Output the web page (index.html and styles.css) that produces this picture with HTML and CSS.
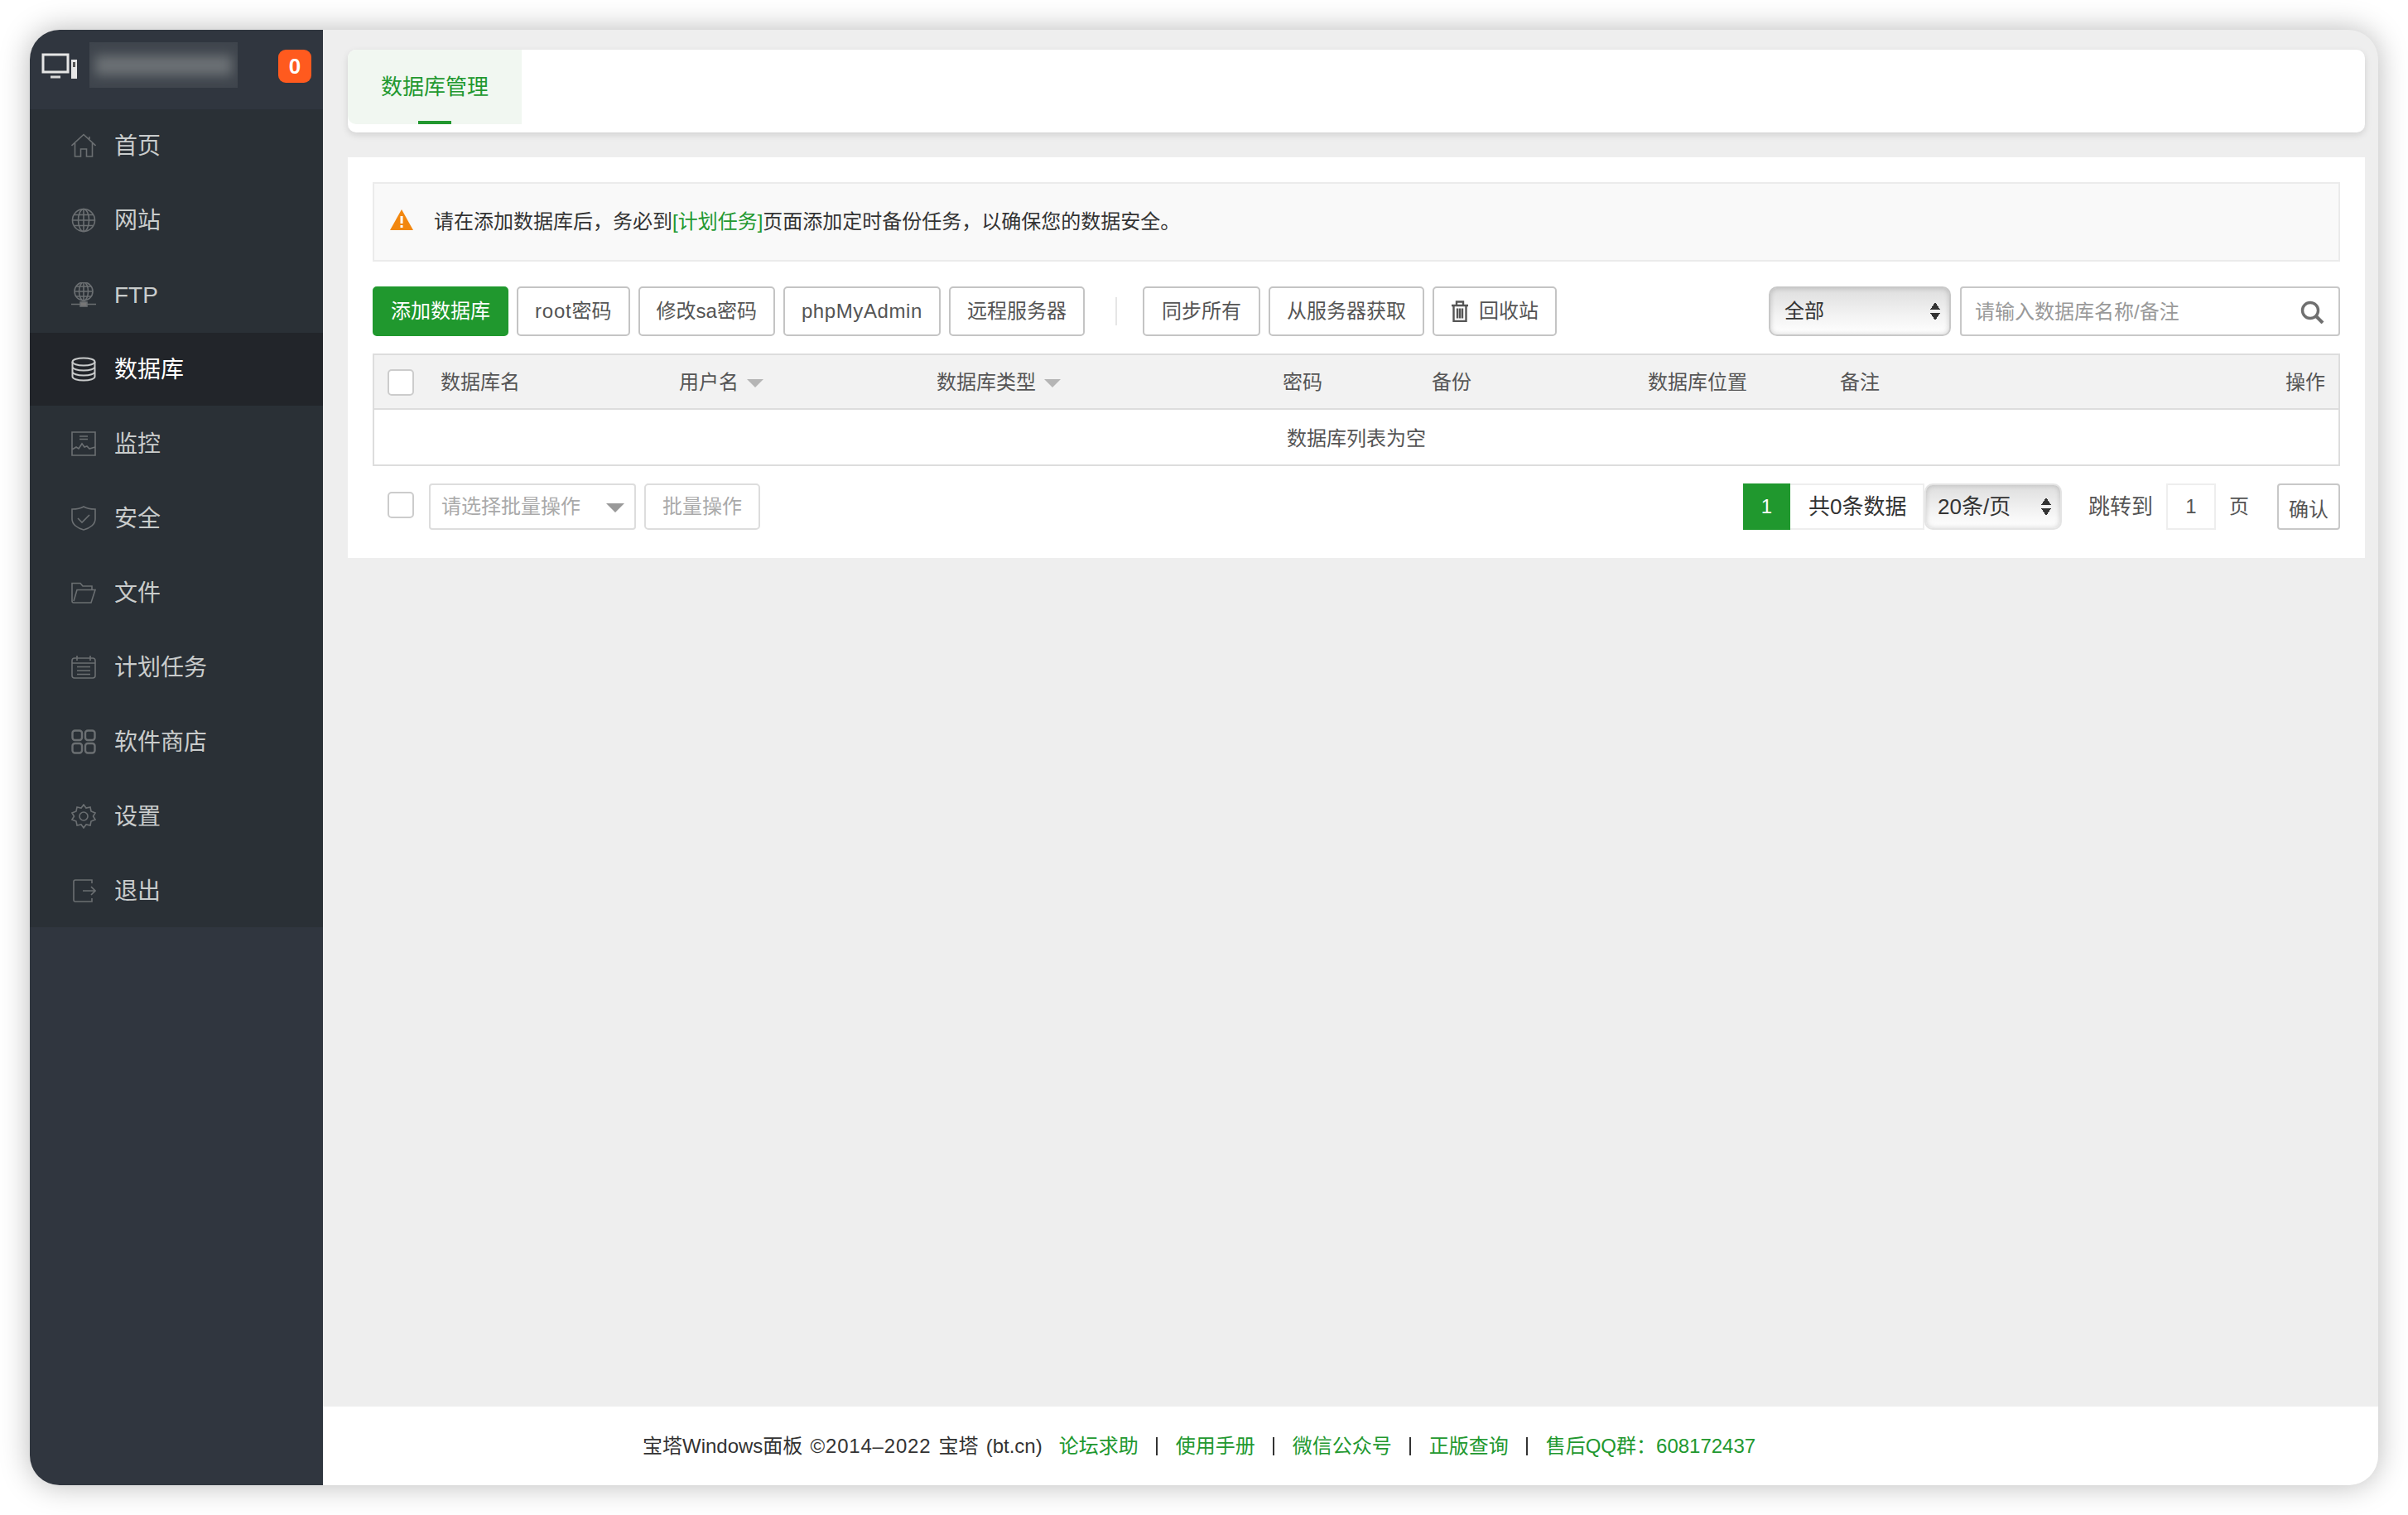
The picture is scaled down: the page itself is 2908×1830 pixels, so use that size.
FILE: index.html
```html
<!DOCTYPE html>
<html lang="zh-CN">
<head>
<meta charset="utf-8">
<title>数据库管理</title>
<link rel="stylesheet" href="styles.css">
</head>
<body>
<div class="window">
  <aside class="sidebar">
    <div class="brand">
      <svg class="brand-icon" viewBox="0 0 44 32"><path d="M2 2h30v21H2z" fill="none" stroke="#e6e6e6" stroke-width="3"/><path d="M11 29h12" stroke="#d8d8d8" stroke-width="3"/><path d="M36 8h7v23h-7z" fill="#e6e6e6"/><path d="M38 11h3v6h-3z" fill="#555"/></svg>
      <div class="blur-box"><div class="blur-bar"></div></div>
      <span class="badge">0</span>
    </div>
    <nav class="menu">
      <a class="menu-item"><svg class="ico" viewBox="0 0 30 30"><path d="M0.5 15L15 1.5 29.5 15M4.5 12v16h7v-9h7v9h7V12M22 4v3" /></svg>首页</a>
      <a class="menu-item"><svg class="ico" viewBox="0 0 30 30"><circle cx="15" cy="15" r="13.5"/><ellipse cx="15" cy="15" rx="6.5" ry="13.5"/><path d="M15 1.500v27M1.500 15h27M3.500 8.500h23M3.500 21.500h23"/></svg>网站</a>
      <a class="menu-item"><svg class="ico" viewBox="0 0 30 30"><circle cx="15" cy="11" r="11"/><ellipse cx="15" cy="11" rx="5.500" ry="11"/><path d="M15 0v22M4 11h22M6 5h18M6 17h18M0 26.500h30"/><rect x="11" y="24" width="8" height="5" fill="#777"/></svg>FTP</a>
      <a class="menu-item active"><svg class="ico" viewBox="0 0 30 30"><ellipse cx="15" cy="6" rx="13.500" ry="4.500"/><path d="M1.500 6v18c0 2.500 6 4.500 13.500 4.500s13.500-2 13.500-4.500V6M1.500 12c0 2.500 6 4.500 13.500 4.500s13.500-2 13.500-4.500M1.500 18c0 2.500 6 4.500 13.500 4.500s13.500-2 13.500-4.500"/></svg>数据库</a>
      <a class="menu-item"><svg class="ico" viewBox="0 0 30 30"><path d="M1 1h28v28H1zM10 6h10M10 9.500h10M1 22l5-3 3 2 4-6 3 4 3-1 3 3 7-2"/></svg>监控</a>
      <a class="menu-item"><svg class="ico" viewBox="0 0 30 30"><path d="M15 1c4 2.500 8 3 14 3v12c0 6-6 11-14 13C7 27 1 22 1 16V4c6 0 10-.5 14-3z"/><path d="M8 15l5 5 9-9"/></svg>安全</a>
      <a class="menu-item"><svg class="ico" viewBox="0 0 30 30"><path d="M1 25V3.500h10l3 3.500h11v4M1 25c0 1 1 2 2 2h21l5-15.500H7L3 25"/></svg>文件</a>
      <a class="menu-item"><svg class="ico" viewBox="0 0 30 30"><rect x="1" y="4" width="28" height="24" rx="3"/><path d="M7 1v6M23 1v6M1 10h28M7 14.500h16M7 19h16M7 23.500h16" /></svg>计划任务</a>
      <a class="menu-item"><svg class="ico ico-wide" viewBox="0 0 30 30"><rect x="1.500" y="1.500" width="11.500" height="11.500" rx="3"/><rect x="17" y="1.500" width="11.500" height="11.500" rx="3"/><rect x="1.500" y="17" width="11.500" height="11.500" rx="3"/><rect x="17" y="17" width="11.500" height="11.500" rx="3"/></svg>软件商店</a>
      <a class="menu-item"><svg class="ico" viewBox="0 0 30 30"><circle cx="15" cy="15" r="5"/><path d="M15 1l3 4 5-1 1 5 5 2-2.500 4 2.500 4-5 2-1 5-5-1-3 4-3-4-5 1-1-5-5-2 2.500-4L1 11l5-2 1-5 5 1z"/></svg>设置</a>
      <a class="menu-item"><svg class="ico" viewBox="0 0 30 30"><path d="M25 6V2H5a2 2 0 0 0-2 2v22a2 2 0 0 0 2 2h20v-4M14 15h15M24 10l5 5-5 5"/></svg>退出</a>
    </nav>
  </aside>
  <div class="content">
    <div class="page">
      <div class="tabbar"><div class="tab">数据库管理<i class="tab-line"></i></div></div>
      <section class="panel">
        <div class="notice">
          <svg class="warn" viewBox="0 0 28 25"><path d="M14 0l14 25H0z" fill="#f2870f"/><path d="M12.500 8h3v9h-3zM12.500 19h3v3h-3z" fill="#fff"/></svg>
          <span>请在添加数据库后，务必到<a class="link">[计划任务]</a>页面添加定时备份任务，以确保您的数据安全。</span>
        </div>
        <div class="toolbar">
          <a class="btn primary">添加数据库</a>
          <a class="btn"><span class="latin-root">root</span>密码</a>
          <a class="btn">修改sa密码</a>
          <a class="btn"><span class="latin-php">phpMyAdmin</span></a>
          <a class="btn">远程服务器</a>
          <i class="sep"></i>
          <a class="btn btn-sync">同步所有</a>
          <a class="btn">从服务器获取</a>
          <a class="btn"><svg class="trash" viewBox="0 0 22 26"><path d="M1 6h20M7 5V1.500h8V5M3.500 6v19h15V6M8 9.500v12M11 9.500v12M14 9.500v12"/></svg>回收站</a>
          <div class="toolbar-right">
            <div class="native-select main-select">全部<i class="updown"></i></div>
            <div class="search"><input class="search-input" placeholder="请输入数据库名称/备注"><svg class="search-icon" viewBox="0 0 29 28"><circle cx="12" cy="12" r="9.500"/><path d="M19 19l8 8" stroke-width="4"/></svg></div>
          </div>
        </div>
        <table class="grid">
          <colgroup><col class="c1"><col class="c2"><col class="c3"><col class="c4"><col class="c5"><col class="c6"><col class="c7"><col></colgroup>
          <thead>
            <tr>
              <th class="check-cell"><i class="check"></i></th>
              <th>数据库名</th>
              <th>用户名<i class="caret"></i></th>
              <th>数据库类型<i class="caret"></i></th>
              <th>密码</th>
              <th>备份</th>
              <th>数据库位置</th>
              <th class="split"><span>备注</span><span>操作</span></th>
            </tr>
          </thead>
          <tbody><tr><td colspan="8">数据库列表为空</td></tr></tbody>
        </table>
        <div class="footer-row">
          <i class="check foot-check"></i>
          <div class="batch-select">请选择批量操作<i class="batch-caret"></i></div>
          <a class="batch-btn">批量操作</a>
          <div class="pager">
            <span class="page-cur">1</span>
            <span class="page-count">共0条数据</span>
            <div class="native-select page-select">20条/页<i class="updown"></i></div>
            <span class="jump">跳转到</span>
            <span class="page-input">1</span>
            <span class="page-unit">页</span>
            <a class="confirm">确认</a>
          </div>
        </div>
      </section>
    </div>
    <footer class="footer">
      <span class="copyright">宝塔Windows面板 <span class="latin-year">©2014–2022</span> 宝塔 (bt.cn)</span>
      <a class="link f-first">论坛求助</a><i class="bar"></i>
      <a class="link">使用手册</a><i class="bar"></i>
      <a class="link">微信公众号</a><i class="bar"></i>
      <a class="link">正版查询</a><i class="bar"></i>
      <a class="link">售后QQ群：608172437</a>
    </footer>
  </div>
</div>
</body>
</html>
```
FILE: styles.css
```css
* { box-sizing: border-box; }
html, body { margin: 0; height: 100%; }
body {
  width: 2908px;
  height: 1830px;
  padding: 36px;
  background: #fff;
  overflow: hidden;
  font-family: "Liberation Sans", "Noto Sans CJK SC", sans-serif;
  font-size: 24px;
  color: #555;
}
i { display: block; font-style: normal; }

.window {
  display: flex;
  width: 2836px;
  height: 1758px;
  border-radius: 36px;
  overflow: hidden;
  background: #eee;
  box-shadow: 0 0 36px rgba(0, 0, 0, .28);
}

/* sidebar */
.sidebar {
  flex: 0 0 354px;
  background: #30363f;
  display: flex;
  flex-direction: column;
}
.brand {
  height: 96px;
  display: flex;
  align-items: flex-start;
  padding: 15px 14px 0 14px;
}
.brand-icon { width: 44px; height: 32px; margin-top: 13px; flex: none; }
.blur-box {
  width: 179px;
  height: 55px;
  margin-left: 14px;
  background: #3f454d;
  overflow: hidden;
  display: flex;
  align-items: center;
  justify-content: center;
}
.blur-bar {
  width: 165px;
  height: 24px;
  background: #6c7175;
  filter: blur(7px);
}
.badge {
  width: 40px;
  height: 40px;
  margin: 9px 0 0 auto;
  border-radius: 9px;
  background: #ff5a1e;
  color: #fff;
  font-size: 26px;
  font-weight: bold;
  line-height: 40px;
  text-align: center;
}
.menu {
  background: #2a3036;
  display: flex;
  flex-direction: column;
  gap: 2px;
}
.menu-item {
  height: 88px;
  display: flex;
  align-items: center;
  padding: 2px 0 0 50px;
  color: #c9cccc;
  font-size: 28px;
  line-height: 1;
}
.menu-item.active { background: #22252a; color: #fff; }
.ico {
  width: 30px;
  height: 30px;
  margin: -2px 22px 0 0;
  flex: none;
  fill: none;
  stroke: #6b6f72;
  stroke-width: 1.600;
}
.active .ico { stroke: #c8caca; stroke-width: 2; }
.ico-wide { stroke-width: 2.400; }

/* content */
.content {
  flex: 1;
  display: flex;
  flex-direction: column;
  min-width: 0;
}
.page { flex: 1; padding: 24px 16px 0 30px; }
.tabbar {
  height: 100px;
  background: #fff;
  border-radius: 10px;
  box-shadow: 0 3px 8px rgba(0, 0, 0, .12);
}
.tab {
  position: relative;
  width: 210px;
  height: 90px;
  background: #f1f7f1;
  border-radius: 10px 0 0 10px;
  color: #22982f;
  font-size: 26px;
  line-height: 90px;
  text-align: center;
}
.tab-line {
  position: absolute;
  left: 85px;
  bottom: 0;
  width: 40px;
  height: 4px;
  background: #22982f;
}
.panel {
  margin-top: 30px;
  height: 484px;
  background: #fff;
  padding: 30px;
}
.notice {
  height: 96px;
  background: #f9f9f9;
  border: 2px solid #ebebeb;
  display: flex;
  align-items: center;
  padding-left: 19px;
  color: #333;
  line-height: 1;
}
.warn { width: 28px; height: 25px; margin: 0 25px 5px 0; flex: none; }
.link { color: #22982f; text-decoration: none; }

.toolbar {
  margin-top: 30px;
  display: flex;
  align-items: center;
  gap: 10px;
  height: 60px;
}
.btn {
  height: 60px;
  padding: 0 20px;
  border: 2px solid #c4c4c4;
  border-radius: 5px;
  background: #fff;
  color: #555;
  display: flex;
  align-items: center;
  line-height: 1;
  white-space: nowrap;
}
.btn.primary {
  background: #20982e;
  border-color: #20982e;
  color: #fff;
}
.btn-sync { padding: 0 21px; }
.latin-root { letter-spacing: .8px; }
.latin-php { letter-spacing: .6px; }
.latin-year { letter-spacing: .8px; }
.copyright { word-spacing: 2.500px; }
.sep { width: 2px; height: 34px; background: #e6e6e6; margin: 0 21px 0 27px; }
.trash { width: 22px; height: 26px; margin-right: 12px; fill: none; stroke: #555; stroke-width: 2.400; }
.toolbar-right { margin-left: auto; display: flex; gap: 11px; }
.native-select {
  position: relative;
  height: 60px;
  border-radius: 10px;
  border: 2px solid #c8c8c8;
  background: linear-gradient(#dedede, #f3f3f3 60%, #fff);
  box-shadow: inset 0 0 6px rgba(0, 0, 0, .18);
  color: #333;
  display: flex;
  align-items: center;
  line-height: 1;
}
.main-select { width: 220px; padding-left: 17px; }
.updown {
  position: absolute;
  right: 11px;
  top: 50%;
  width: 12px;
  height: 22px;
  margin-top: -11px;
  background:
    linear-gradient(to bottom right, transparent 50%, #333 50%) 0 0 / 6px 9px no-repeat,
    linear-gradient(to bottom left, transparent 50%, #333 50%) 6px 0 / 6px 9px no-repeat,
    linear-gradient(to top right, transparent 50%, #333 50%) 0 13px / 6px 9px no-repeat,
    linear-gradient(to top left, transparent 50%, #333 50%) 6px 13px / 6px 9px no-repeat;
}
.search {
  position: relative;
  width: 459px;
  height: 60px;
  border: 2px solid #c8c8c8;
  border-radius: 4px;
  background: #fff;
}
.search-input {
  width: 100%;
  height: 100%;
  border: 0;
  outline: 0;
  background: transparent;
  padding: 2px 60px 0 16px;
  font: inherit;
  color: #555;
}
.search-input::placeholder { color: #999; opacity: 1; }
.search-icon {
  position: absolute;
  right: 17px;
  top: 15px;
  width: 29px;
  height: 28px;
  fill: none;
  stroke: #6f6f6f;
  stroke-width: 3.400;
}

/* table */
.grid {
  margin-top: 21px;
  width: 2376px;
  table-layout: fixed;
  border-collapse: separate;
  border-spacing: 0;
  border: 2px solid #ddd;
}
.c1 { width: 60px; }
.c2 { width: 288px; }
.c3 { width: 311px; }
.c4 { width: 418px; }
.c5 { width: 180px; }
.c6 { width: 261px; }
.c7 { width: 232px; }
.grid th {
  height: 66px;
  padding: 1px 0 0 20px;
  background: #f2f2f2;
  border-bottom: 2px solid #ddd;
  font-weight: normal;
  text-align: left;
  color: #555;
  line-height: 1;
  white-space: nowrap;
}
.grid th.check-cell { padding-left: 16px; }
.grid th.split { padding-right: 16px; }
.split span:last-child { float: right; }
.grid td {
  height: 66px;
  padding: 3px 0 0;
  text-align: center;
  color: #555;
  line-height: 1;
}
.check {
  width: 32px;
  height: 32px;
  border: 2px solid #ccc;
  border-radius: 5px;
  background: #fff;
  flex: none;
}
.foot-check { margin-top: -4px; }
.caret {
  display: inline-block;
  width: 0;
  height: 0;
  margin-left: 10px;
  border-style: solid;
  border-width: 10px 10px 0;
  border-color: #b5b5b5 transparent transparent;
  vertical-align: 2px;
}

/* list footer */
.footer-row {
  margin-top: 21px;
  display: flex;
  align-items: center;
  padding-left: 18px;
  height: 56px;
}
.batch-select {
  position: relative;
  width: 250px;
  height: 56px;
  margin-left: 18px;
  border: 2px solid #ddd;
  border-radius: 4px;
  color: #aaa;
  display: flex;
  align-items: center;
  padding-left: 13px;
  line-height: 1;
}
.batch-caret {
  position: absolute;
  right: 12px;
  top: 22px;
  width: 0;
  height: 0;
  border-style: solid;
  border-width: 11px 11px 0;
  border-color: #999 transparent transparent;
}
.batch-btn {
  width: 140px;
  height: 56px;
  margin-left: 10px;
  border: 2px solid #ddd;
  border-radius: 5px;
  color: #aaa;
  display: flex;
  align-items: center;
  justify-content: center;
  line-height: 1;
}
.pager {
  margin-left: auto;
  display: flex;
  align-items: center;
  height: 56px;
  line-height: 1;
  font-size: 26px;
}
.page-cur {
  width: 57px;
  height: 56px;
  background: #20982e;
  color: #fff;
  display: flex;
  align-items: center;
  justify-content: center;
  font-size: 24px;
}
.page-count {
  width: 162px;
  height: 56px;
  border: 2px solid #eee;
  border-left: 0;
  color: #333;
  display: flex;
  align-items: center;
  padding-left: 22px;
  white-space: nowrap;
}
.page-select {
  width: 166px;
  height: 56px;
  padding-left: 14px;
  border-color: #e4e4e4;
}
.jump { margin-left: 32px; width: 94px; white-space: nowrap; }
.page-input {
  width: 60px;
  height: 56px;
  border: 2px solid #eee;
  color: #555;
  font-size: 24px;
  display: flex;
  align-items: center;
  justify-content: center;
}
.page-unit { margin-left: 16px; width: 58px; font-size: 24px; }
.confirm {
  width: 76px;
  height: 56px;
  border: 2px solid #c8c8c8;
  border-radius: 4px;
  color: #555;
  font-size: 24px;
  display: flex;
  align-items: center;
  justify-content: center;
  padding-top: 8px;
  white-space: nowrap;
}

/* page footer */
.footer {
  height: 95px;
  background: #fff;
  display: flex;
  align-items: center;
  padding-left: 386px;
  color: #333;
  line-height: 1;
  white-space: nowrap;
}
.f-first { margin-left: 20px; }
.bar { width: 2px; height: 22px; background: #333; margin: 0 22px 0 21px; }
```
